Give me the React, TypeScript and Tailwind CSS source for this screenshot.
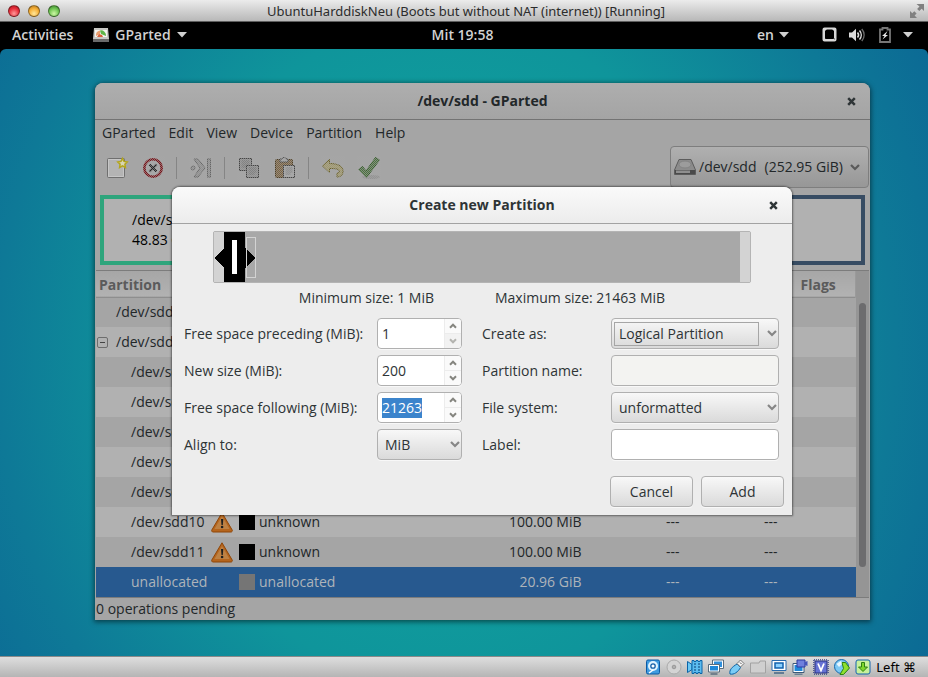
import React, { useEffect, useRef } from "react";

const UI_FONT = "font-['Open_Sans','Noto_Sans',sans-serif]";

function Caret() {
  return (
    <svg width="10" height="6" viewBox="0 0 10 6" aria-hidden="true">
      <path d="M0 0h10L5 5.5z" fill="#d0d0d0" />
    </svg>
  );
}

function Cross() {
  return (
    <svg width="9" height="9" viewBox="0 0 9 9" aria-hidden="true">
      <path d="M1.2 1.2l6.6 6.6M7.8 1.2L1.2 7.8" stroke="#2e3436" strokeWidth="2.5" />
    </svg>
  );
}

function HostTitleBar() {
  const lights = [
    "bg-[radial-gradient(circle_at_50%_75%,#ff9a9a,#e8303c_55%,#a8121c)]",
    "bg-[radial-gradient(circle_at_50%_75%,#ffe79a,#f5ae35_55%,#a8701c)]",
    "bg-[radial-gradient(circle_at_50%_75%,#cdf7a5,#6fc552_55%,#357a2a)]",
  ];
  return (
    <header className="flex h-[22px] shrink-0 items-center justify-between border-b border-[#5f5f5f] bg-gradient-to-b from-[#ececec] to-[#b8b8b8] pr-1 pl-2">
      <div className="flex w-20 gap-2">
        {lights.map((c, i) => (
          <button key={i} aria-label={["Close", "Minimize", "Zoom"][i]} className={`h-3 w-3 rounded-full border border-black/40 ${c}`} />
        ))}
      </div>
      <h1 className="font-['Noto_Sans',sans-serif] text-[13px] leading-5 text-[#2c2c2c]">UbuntuHarddiskNeu (Boots but without NAT (internet)) [Running]</h1>
      <div className="flex w-20 justify-end">
        <svg width="14" height="14" viewBox="0 0 14 14" fill="#808080" aria-hidden="true">
          <path d="M6.5 0H14v7l-2.3-2.3-2.4 2.4-2.2-2.2 2.4-2.4zM0 7l2.3 2.3 2-2L6.600 9.600l-2 2L7 14H0z" />
        </svg>
      </div>
    </header>
  );
}

function TopPanel() {
  return (
    <nav className="grid h-[27px] shrink-0 grid-cols-[1fr_auto_1fr] items-center bg-black pr-[15px] pb-[2px] pl-3 text-[14px] leading-5 font-semibold text-[#d2d2d2]">
      <div className="flex items-center gap-5">
        <button>Activities</button>
        <button className="flex items-center gap-[6px]">
          <svg width="16" height="14" viewBox="0 0 16 14" aria-hidden="true">
            <path d="M1 0h14l1 11v3H0v-3z" fill="#c8c8c4" />
            <path d="M0 11h16v3H0z" fill="#6a6a6a" />
            <path d="M2 2h12v7H2z" fill="#f4f4f0" />
            <path d="M3 8a5 5 0 0 1 4-5.500V6z" fill="#e8a070" />
            <path d="M7 2.500A5 5 0 0 1 13 8L8 6z" fill="#5fb548" />
            <path d="M4 9l2-3 3 1 1 2z" fill="#d8603a" />
          </svg>
          GParted
          <Caret />
        </button>
      </div>
      <span>Mit 19:58</span>
      <div className="flex items-center justify-end">
        <button className="mr-[33px] flex items-center gap-[5px]">
          en <Caret />
        </button>
        <svg className="mr-3" width="15" height="15" viewBox="0 0 15 15" aria-hidden="true">
          <rect x="1.500" y="1.500" width="12" height="12" rx="1" fill="none" stroke="#d8d8d8" strokeWidth="2" />
          <path d="M2 2h3l-2 2v9H2zM13 2h-3l2 2v9h1zM2 13v-2l2 1h7l2-1v2z" fill="#d8d8d8" />
        </svg>
        <svg className="mr-[14px]" width="16" height="14" viewBox="0 0 16 14" fill="none" aria-hidden="true">
          <path d="M0 4.500h3L7 .8v12.400L3 9.500H0z" fill="#dcdcdc" />
          <path d="M8.500 4.500c1.300 1.500 1.300 3.500 0 5" stroke="#dcdcdc" strokeWidth="1.500" />
          <path d="M10.500 2.500c2.300 2.600 2.300 6.400 0 9" stroke="#dcdcdc" strokeWidth="1.500" />
          <path d="M12.800 1c3 3.600 3 8.400 0 12" stroke="#6a6a6a" strokeWidth="1.500" />
        </svg>
        <svg className="mr-3" width="12" height="16" viewBox="0 0 12 16" aria-hidden="true">
          <path d="M1 2.500h2.500V1h5v1.500H11V15H1z" fill="none" stroke="#777" strokeWidth="1.800" />
          <path d="M8.500 4L3 9h2.500L3.500 12.500 9 8H6.500z" fill="#e8e8e8" />
        </svg>
        <Caret />
      </div>
    </nav>
  );
}

function Checker({ id }: { id: string }) {
  return (
    <>
      <defs>
        <pattern id={id} width="2" height="2" patternUnits="userSpaceOnUse">
          <path d="M0 0h1v1H0zM1 1h1v1H1z" fill="#a6a6a6" fillOpacity="0.6" shapeRendering="crispEdges" />
        </pattern>
      </defs>
      <rect width="24" height="24" fill={`url(#${id})`} />
    </>
  );
}

function ToolButton({ label, children }: { label: string; children: React.ReactNode }) {
  return (
    <button aria-label={label} className="h-6 w-6">
      <svg width="24" height="24" viewBox="0 0 24 24" fill="none" aria-hidden="true">
        {children}
      </svg>
    </button>
  );
}

function ToolSeparator() {
  return <span className="-ml-px h-[22px] w-px bg-[#858585]" />;
}

function Toolbar() {
  return (
    <div className="flex h-[42px] items-start justify-between pl-[9px]">
      <div className="flex h-11 items-center gap-3">
        <ToolButton label="New">
          <rect x="2.500" y="2.500" width="17" height="19" rx="1" fill="#b4b4b4" stroke="#6f6f6f" />
          <path d="M3.500 3.500h15v17h-15z" stroke="#c6c6c6" />
          <path d="M17.500 2.500l1.500 2.900 3.200.5-2.300 2.300.5 3.300-2.900-1.600-2.900 1.600.5-3.300-2.300-2.300 3.200-.5z" fill="#d8d6b4" stroke="#b3a51c" strokeWidth="1.500" />
        </ToolButton>
        <ToolButton label="Delete">
          <circle cx="12" cy="12" r="8.700" fill="#a8a8a8" stroke="#78141a" strokeWidth="2.600" />
          <path d="M8.500 8.500l7 7M15.500 8.500l-7 7" stroke="#222" strokeWidth="2.200" />
          <Checker id="ck1" />
        </ToolButton>
        <ToolSeparator />
        <ToolButton label="Resize/Move">
          <path d="M5 3h4l7 9-7 9H5l6-9z" fill="#909090" stroke="#666" />
          <circle cx="4" cy="12" r="2" fill="#909090" stroke="#666" />
          <rect x="18.500" y="3" width="3" height="18" fill="#909090" stroke="#666" />
          <Checker id="ck2" />
        </ToolButton>
        <ToolSeparator />
        <ToolButton label="Copy">
          <rect x="2.500" y="2.500" width="12" height="12" fill="#909090" stroke="#444" />
          <path d="M4.500 5h8M4.500 7h8M4.500 9h8M4.500 11h6" stroke="#757575" />
          <rect x="9.500" y="9.500" width="12" height="12" fill="#909090" stroke="#444" />
          <path d="M11.500 12h8M11.500 14h8M11.500 16h8M11.500 18h6" stroke="#757575" />
          <Checker id="ck3" />
        </ToolButton>
        <ToolButton label="Paste">
          <rect x="2.500" y="3.500" width="17" height="18" rx="1" fill="#7a6240" stroke="#4f3f24" />
          <path d="M7 6V3h2c0-2 4-2 4 0h2v3z" fill="#a5a5a5" stroke="#444" />
          <rect x="10.500" y="9.500" width="11" height="12" fill="#a8a8a8" stroke="#444" />
          <path d="M12.500 12h7M12.500 14h7M12.500 16h7M12.500 18h5" stroke="#808080" />
          <Checker id="ck4" />
        </ToolButton>
        <ToolSeparator />
        <ToolButton label="Undo">
          <path d="M1.500 10l7-6.500V7.500c7 0 13 2 13.500 7 .3 4-2 6.500-6 6.500v-4c2 0 3-1 2.200-2.500-1.200-1.800-4.700-2-9.700-2v4z" fill="#a39a6c" stroke="#6c6228" />
          <Checker id="ck5" />
        </ToolButton>
        <ToolButton label="Apply">
          <ellipse cx="14" cy="21" rx="9" ry="2" fill="#949494" />
          <path d="M1.500 13.500l4-3 3.500 4.500L18.500 1.500l4 2.500L9.500 21.500z" fill="#4c7040" stroke="#335a28" />
          <Checker id="ck6" />
        </ToolButton>
      </div>
      <button className="flex h-[42px] w-[199px] items-center rounded border border-[#7e7e7e] bg-gradient-to-b from-[#b0b0b0] to-[#979797] pl-[3px] text-[14px] leading-5 text-[#222729]">
        <svg width="22" height="16" viewBox="0 0 22 16" aria-hidden="true">
          <path d="M5 .5h12L21.500 11v4.500H.5V11z" fill="#8c8c8c" stroke="#5c5c5c" />
          <path d="M1 11h20v4H1z" fill="#4a4a4a" />
          <path d="M2 11.500h14v2.500H2z" fill="#8f8f8f" />
          <ellipse cx="11" cy="5.500" rx="6" ry="3.500" fill="#9c9c9c" stroke="#838383" />
        </svg>
        <span className="ml-[3px]">/dev/sdd</span>
        <span className="ml-2">(252.95 GiB)</span>
        <svg className="mr-2 ml-auto" width="10" height="7" viewBox="0 0 10 7" fill="none" aria-hidden="true">
          <path d="M1 1l4 4 4-4" stroke="#5a5a5a" strokeWidth="2.200" />
        </svg>
      </button>
    </div>
  );
}

function Warning() {
  return (
    <svg width="22" height="21" viewBox="0 0 22 21" aria-hidden="true">
      <path d="M11 .8L21.200 18c.4 1-.2 2-1.200 2H2c-1 0-1.600-1-1.200-2z" fill="#b5651d" stroke="#8f4608" />
      <path d="M11 4l7.500 13h-15z" fill="#bd8143" />
      <path d="M10 7h2.300l-.5 6h-1.300z" fill="#1d1d1d" />
      <circle cx="11.100" cy="15" r="1.300" fill="#1d1d1d" />
    </svg>
  );
}

type Row = { name: string; level: number; fs?: string; size?: string; swatch?: string; warn?: boolean; selected?: boolean };

const rows: Row[] = [
  { name: "/dev/sdd1", level: 0 },
  { name: "/dev/sdd2", level: 0 },
  { name: "/dev/sdd5", level: 1 },
  { name: "/dev/sdd6", level: 1 },
  { name: "/dev/sdd7", level: 1 },
  { name: "/dev/sdd8", level: 1 },
  { name: "/dev/sdd9", level: 1 },
  { name: "/dev/sdd10", level: 1, fs: "unknown", size: "100.00 MiB", swatch: "bg-black", warn: true },
  { name: "/dev/sdd11", level: 1, fs: "unknown", size: "100.00 MiB", swatch: "bg-black", warn: true },
  { name: "unallocated", level: 1, fs: "unallocated", size: "20.96 GiB", swatch: "bg-[#757575]", selected: true },
];

function PartitionTable() {
  return (
    <div className="flex border-y border-[#7c7c7c]">
      <table className="w-full table-fixed border-collapse text-[14px] leading-5 text-[#222729]">
        <colgroup>
          <col className="w-[140px]" />
          <col />
          <col className="w-[110px]" />
          <col className="w-[98px]" />
          <col className="w-[98px]" />
          <col className="w-[66px]" />
        </colgroup>
        <thead>
          <tr className="h-[26px] border-b border-[#8e8e8e] bg-gradient-to-b from-[#a6a6a6] to-[#b2b2b2] text-left text-[#5b5b5b]">
            <th className="p-0 pt-[2px] pl-[3px] font-bold">Partition</th>
            <th />
            <th />
            <th />
            <th />
            <th className="border-r border-[#9a9a9a] p-0 pt-[2px] pl-[11px] font-bold">Flags</th>
          </tr>
        </thead>
        <tbody>
          {rows.map((r, i) => (
            <tr key={r.name} className={`h-[30px] ${r.selected ? "bg-[#27598f] text-[#aeb4ba]" : i % 2 ? "bg-[#b1b1b1]" : "bg-[#a5a5a5]"}`}>
              <td className="p-0">
                <div className={`flex items-center justify-between pr-[3px] ${r.level ? "pl-[35px]" : i === 1 ? "pl-px" : "pl-5"}`}>
                  <span className="flex items-center">
                    {i === 1 && (
                      <button aria-label="Collapse" className="mr-2 flex h-[11px] w-[11px] items-center justify-center rounded-[2px] border border-[#6d6d6d]">
                        <span className="h-px w-[5px] bg-[#444]" />
                      </button>
                    )}
                    {r.name}
                  </span>
                  {r.warn && <Warning />}
                </div>
              </td>
              <td className="p-0">
                {r.fs && (
                  <div className="flex items-center gap-1 pl-[3px]">
                    <span className={`h-4 w-4 ${r.swatch}`} />
                    {r.fs}
                  </div>
                )}
              </td>
              <td className="p-0 pr-3 text-right whitespace-nowrap">{r.size}</td>
              <td className="p-0 pr-3 text-right">{r.size && "---"}</td>
              <td className="p-0 pr-3 text-right">{r.size && "---"}</td>
              <td />
            </tr>
          ))}
        </tbody>
      </table>
      <div className="flex w-[13px] shrink-0 flex-col bg-[#959595] px-[3px] pt-8 pb-[30px]">
        <span className="flex-1 rounded-full bg-[#6c6c6e]" />
      </div>
    </div>
  );
}

const field = "h-[31px] w-full rounded border border-[#b0b0b0] text-[14px] leading-5 text-[#2e3436] shadow-[0_1px_0_#f8f8f8]";

function Chevron({ up, dim }: { up?: boolean; dim?: boolean }) {
  return (
    <svg width="8" height="6" viewBox="0 0 8 6" fill="none" aria-hidden="true">
      <path d={up ? "M1 4.700l3-3 3 3" : "M1 1.300l3 3 3-3"} stroke={dim ? "#b4b4b0" : "#868680"} strokeWidth="2" />
    </svg>
  );
}

function Spin({ id, label, value, atMin, selected }: { id: string; label: string; value: string; atMin?: boolean; selected?: boolean }) {
  const ref = useRef<HTMLInputElement>(null);
  useEffect(() => {
    if (selected) {
      ref.current?.focus();
      ref.current?.select();
    }
  }, [selected]);
  return (
    <>
      <label htmlFor={id}>{label}</label>
      <div className={`${field} flex overflow-hidden bg-white`}>
        <input ref={ref} id={id} defaultValue={value} inputMode="numeric" className="w-[66px] min-w-0 pl-1 outline-none selection:bg-[#3b84cc] selection:text-white" />
        <div className="flex flex-1 flex-col border-l border-[#ececec]">
          <button aria-label={`Increase ${label}`} className="flex flex-1 items-center justify-center bg-[#fafafa]">
            <Chevron up />
          </button>
          <button aria-label={`Decrease ${label}`} disabled={atMin} className={`flex flex-1 items-center justify-center border-t border-[#ececec] ${atMin ? "bg-[#f2f2f2]" : "bg-[#fafafa]"}`}>
            <Chevron dim={atMin} />
          </button>
        </div>
      </div>
    </>
  );
}

function Select({ id, label, value, focused }: { id: string; label: string; value: string; focused?: boolean }) {
  return (
    <>
      <label htmlFor={id}>{label}</label>
      <div className="relative">
        <select id={id} className={`${field} appearance-none bg-gradient-to-b from-[#f8f8f8] to-[#dadada] pl-[7px] outline-none`}>
          <option>{value}</option>
        </select>
        {focused && <span className="pointer-events-none absolute top-1 right-5 bottom-[3px] left-[3px] border border-[#a6a6a6]" />}
        <svg className="pointer-events-none absolute top-3 right-[2px]" width="10" height="7" viewBox="0 0 10 7" fill="none" aria-hidden="true">
          <path d="M1 1l4 4 4-4" stroke="#868686" strokeWidth="2.200" />
        </svg>
      </div>
    </>
  );
}

function PartitionDialog() {
  const action = "h-[31px] w-[83px] rounded border border-[#b0b0b0] bg-gradient-to-b from-[#f8f8f8] to-[#dadada] shadow-[0_1px_0_#f8f8f8]";
  return (
    <section
      role="dialog"
      aria-label="Create new Partition"
      className="absolute top-[104px] right-[78px] left-[77px] rounded-t-lg bg-[#ededed] pb-2 text-[14px] leading-5 text-[#2e3436] shadow-[0_0_2px_1px_rgba(0,0,0,0.45)]"
    >
      <header className="grid h-[37px] grid-cols-[1fr_auto_1fr] items-center rounded-t-lg border-b border-[#a2a2a2] bg-gradient-to-b from-[#fafafa] to-[#ececec] px-[14px]">
        <h2 className="col-start-2 font-bold">Create new Partition</h2>
        <button aria-label="Close dialog" className="justify-self-end">
          <Cross />
        </button>
      </header>
      <div className="mx-[41px] mt-[7px] flex h-[52px] justify-between rounded-[2px] border border-[#b4b4b4] bg-[#a8a8a8]">
        <svg width="42" height="50" viewBox="0 0 42 50" shapeRendering="crispEdges" aria-hidden="true">
          <path d="M0 0h10v50H0z" fill="#d3d3d3" />
          <path d="M10 0h21v16l10 10-10 10v14H10V36L0 26l10-10z" fill="#000" />
          <path d="M18 8h5v34h-5z" fill="#fff" />
          <rect x="32.500" y="5.500" width="9" height="40" fill="none" stroke="#d3d3d3" />
        </svg>
        <span className="w-[10px] bg-[#d3d3d3]" />
      </div>
      <div className="mt-[5px] flex justify-center gap-[61px]">
        <span>Minimum size: 1 MiB</span>
        <span>Maximum size: 21463 MiB</span>
      </div>
      <form className="mt-[10px] grid grid-cols-[193px_85px_1fr_168px] items-center gap-y-[6px] pr-[13px] pl-3 [&>label:nth-of-type(even)]:pl-5" onSubmit={(e) => e.preventDefault()}>
        <Spin id="before" label="Free space preceding (MiB):" value="1" atMin />
        <Select id="kind" label="Create as:" value="Logical Partition" focused />
        <Spin id="size" label="New size (MiB):" value="200" />
        <label htmlFor="pname">Partition name:</label>
        <input id="pname" disabled className={`${field} bg-[#f3f3f1]`} />
        <Spin id="after" label="Free space following (MiB):" value="21263" selected />
        <Select id="fs" label="File system:" value="unformatted" />
        <Select id="align" label="Align to:" value="MiB" />
        <label htmlFor="plabel">Label:</label>
        <input id="plabel" className={`${field} bg-white`} />
      </form>
      <footer className="mt-4 flex justify-end gap-2 pr-2">
        <button className={action}>Cancel</button>
        <button className={action}>Add</button>
      </footer>
    </section>
  );
}

function GPartedWindow() {
  return (
    <main className="absolute top-[34px] right-[58px] left-[95px] rounded-t-lg bg-[#a5a5a5] px-px text-[#222729] shadow-[0_1px_5px_1px_rgba(0,0,0,0.5)]">
      <header className="-mx-px grid h-[37px] grid-cols-[1fr_auto_1fr] items-center rounded-t-lg border-b border-[#737373] bg-gradient-to-b from-[#aeaeae] to-[#a4a4a4] px-[14px]">
        <h2 className="col-start-2 text-[14px] leading-5 font-bold">/dev/sdd - GParted</h2>
        <button aria-label="Close" className="justify-self-end">
          <Cross />
        </button>
      </header>
      <nav className="flex h-[26px] items-center gap-[13px] pl-[6px] text-[14px] leading-5">
        {["GParted", "Edit", "View", "Device", "Partition", "Help"].map((m) => (
          <button key={m}>{m}</button>
        ))}
      </nav>
      <Toolbar />
      <div className="mx-1 mt-[7px] mb-[5px] flex h-[70px] gap-1 text-[14px] leading-5 text-black">
        <div className="flex w-1/5 flex-col justify-center border-4 border-[#2ea57c] bg-[#b1b1b1] pl-7">
          <span>/dev/sdd1</span>
          <span>48.83 GiB</span>
        </div>
        <div className="flex-1 border-4 border-[#374c63] bg-[#b1b1b1]" />
      </div>
      <PartitionTable />
      <footer className="h-[22px] text-[14px] leading-[22px]">0 operations pending</footer>
      <PartitionDialog />
    </main>
  );
}

function HostStatusBar() {
  const s = { width: 16, height: 16, viewBox: "0 0 16 16", fill: "none", "aria-hidden": true } as const;
  return (
    <footer className="flex h-[21px] shrink-0 items-center justify-end gap-[5px] border-t border-[#8a8a8a] bg-gradient-to-b from-[#dedede] to-[#b5b5b5] pr-3 font-['Noto_Sans',sans-serif] text-[13px] leading-5 text-black">
      <svg {...s}>
        <rect x="1.500" y="1" width="13" height="14" rx="1.500" fill="#3f9be0" stroke="#0a5aa5" />
        <circle cx="8" cy="7" r="5" fill="#dff3ff" />
        <circle cx="8" cy="7" r="2.200" fill="#fff" stroke="#145fa8" strokeWidth="1.300" />
        <path d="M8 11l-4 3" stroke="#fff" strokeWidth="1.500" />
      </svg>
      <svg {...s}>
        <circle cx="8" cy="8" r="7" fill="#d4d4d4" stroke="#aaa" />
        <circle cx="8" cy="8" r="1.800" fill="#b0b0b0" stroke="#999" />
      </svg>
      <svg {...s}>
        <path d="M.5 2.500L5 5.500v5l-4.500 3z" fill="#6cc8f4" stroke="#0a64a8" />
        <path d="M5 1.500h2v1h2v-1h2v1h2v-1h2v13h-2v-1h-2v1H9v-1H7v1H5z" fill="#5cbcf0" stroke="#0a64a8" />
        <path d="M7 5h2M11 5h2M7 8h2M11 8h2M7 11h2M11 11h2" stroke="#083f72" strokeWidth="1.200" />
      </svg>
      <svg {...s}>
        <path d="M4.500 1h11v8.500h-11z" fill="#fff" stroke="#5a6c7c" />
        <path d="M6 2.500h8v5.500H6z" fill="#2f8fdc" />
        <path d="M.5 5.500h11V13H.5z" fill="#fff" stroke="#5a6c7c" />
        <path d="M2 7h8v4.500H2z" fill="#2088d8" />
        <path d="M2.500 15h7" stroke="#5a6c7c" strokeWidth="1.500" />
      </svg>
      <svg {...s}>
        <path d="M1 15c-1-4 2-7 7-10l3.500 3.500C9 13 5 16 1 15z" fill="#7accf6" stroke="#0a64a8" />
        <path d="M8 4.500L11.500 1 15 4.500 11.500 8z" fill="#f5f5f5" stroke="#777" />
        <path d="M11 3.500l1.500 1.500" stroke="#555" />
      </svg>
      <svg {...s}>
        <path d="M.5 4h8.500l1-2h5.500v12H.5z" fill="#cfcfcf" stroke="#a2a2a2" />
      </svg>
      <svg {...s}>
        <path d="M1 1.500h14v10H1z" fill="#fff" stroke="#2a6cae" />
        <path d="M4 4h8v5H4z" fill="#8bd0ff" stroke="#1261ad" strokeWidth="1.500" />
        <path d="M3 14h10" stroke="#58748f" strokeWidth="1.800" />
      </svg>
      <svg {...s}>
        <path d="M1 4.500h11v9H1z" fill="#fff" stroke="#3c5a78" />
        <path d="M2.500 6h8v6h-8z" fill="#2088d8" />
        <path d="M2.500 15.200h8" stroke="#58748f" strokeWidth="1.200" />
        <path d="M5 1h8v7H5z" fill="#6f80dd" stroke="#2c3ba0" />
        <path d="M13 3l2.500-1v5L13 6z" fill="#4555bb" />
      </svg>
      <svg {...s}>
        <rect x="2" y="2" width="12" height="12" fill="#6672d4" stroke="#26307f" />
        <path d="M1 .8h14M1 15.200h14M.8 1v14M15.200 1v14" stroke="#26307f" strokeDasharray="1 1" />
        <path d="M5 4.500l3 7 3-7" stroke="#fff" strokeWidth="1.800" />
      </svg>
      <svg {...s}>
        <circle cx="7.500" cy="7.500" r="7" fill="#7cc8f4" stroke="#1768ad" />
        <path d="M2.500 5l4-3 2.500 2-4 4z" fill="#e6f6ff" />
        <path d="M8 3.500h3.500l4 5.500-6 6.500H6l3.500-6z" fill="#8fe02f" stroke="#2f8510" />
      </svg>
      <svg {...s}>
        <rect x="1" y="1" width="14" height="14" rx="2" fill="#c8f09c" stroke="#1565ad" />
        <path d="M6.500 3.500h3V8h3L8 12.500 3.500 8h3z" fill="#7ed62c" stroke="#2d8010" />
      </svg>
      <span>Left ⌘</span>
    </footer>
  );
}

export default function App() {
  return (
    <div className={`flex h-screen flex-col overflow-hidden bg-black ${UI_FONT}`}>
      <HostTitleBar />
      <TopPanel />
      <div className="relative min-h-0 flex-1 rounded-t-md bg-[radial-gradient(ellipse_62%_110%_at_48%_50%,#10a79f,#0f959b_50%,#0e7997_78%,#0b6694)]">
        <GPartedWindow />
      </div>
      <HostStatusBar />
    </div>
  );
}
